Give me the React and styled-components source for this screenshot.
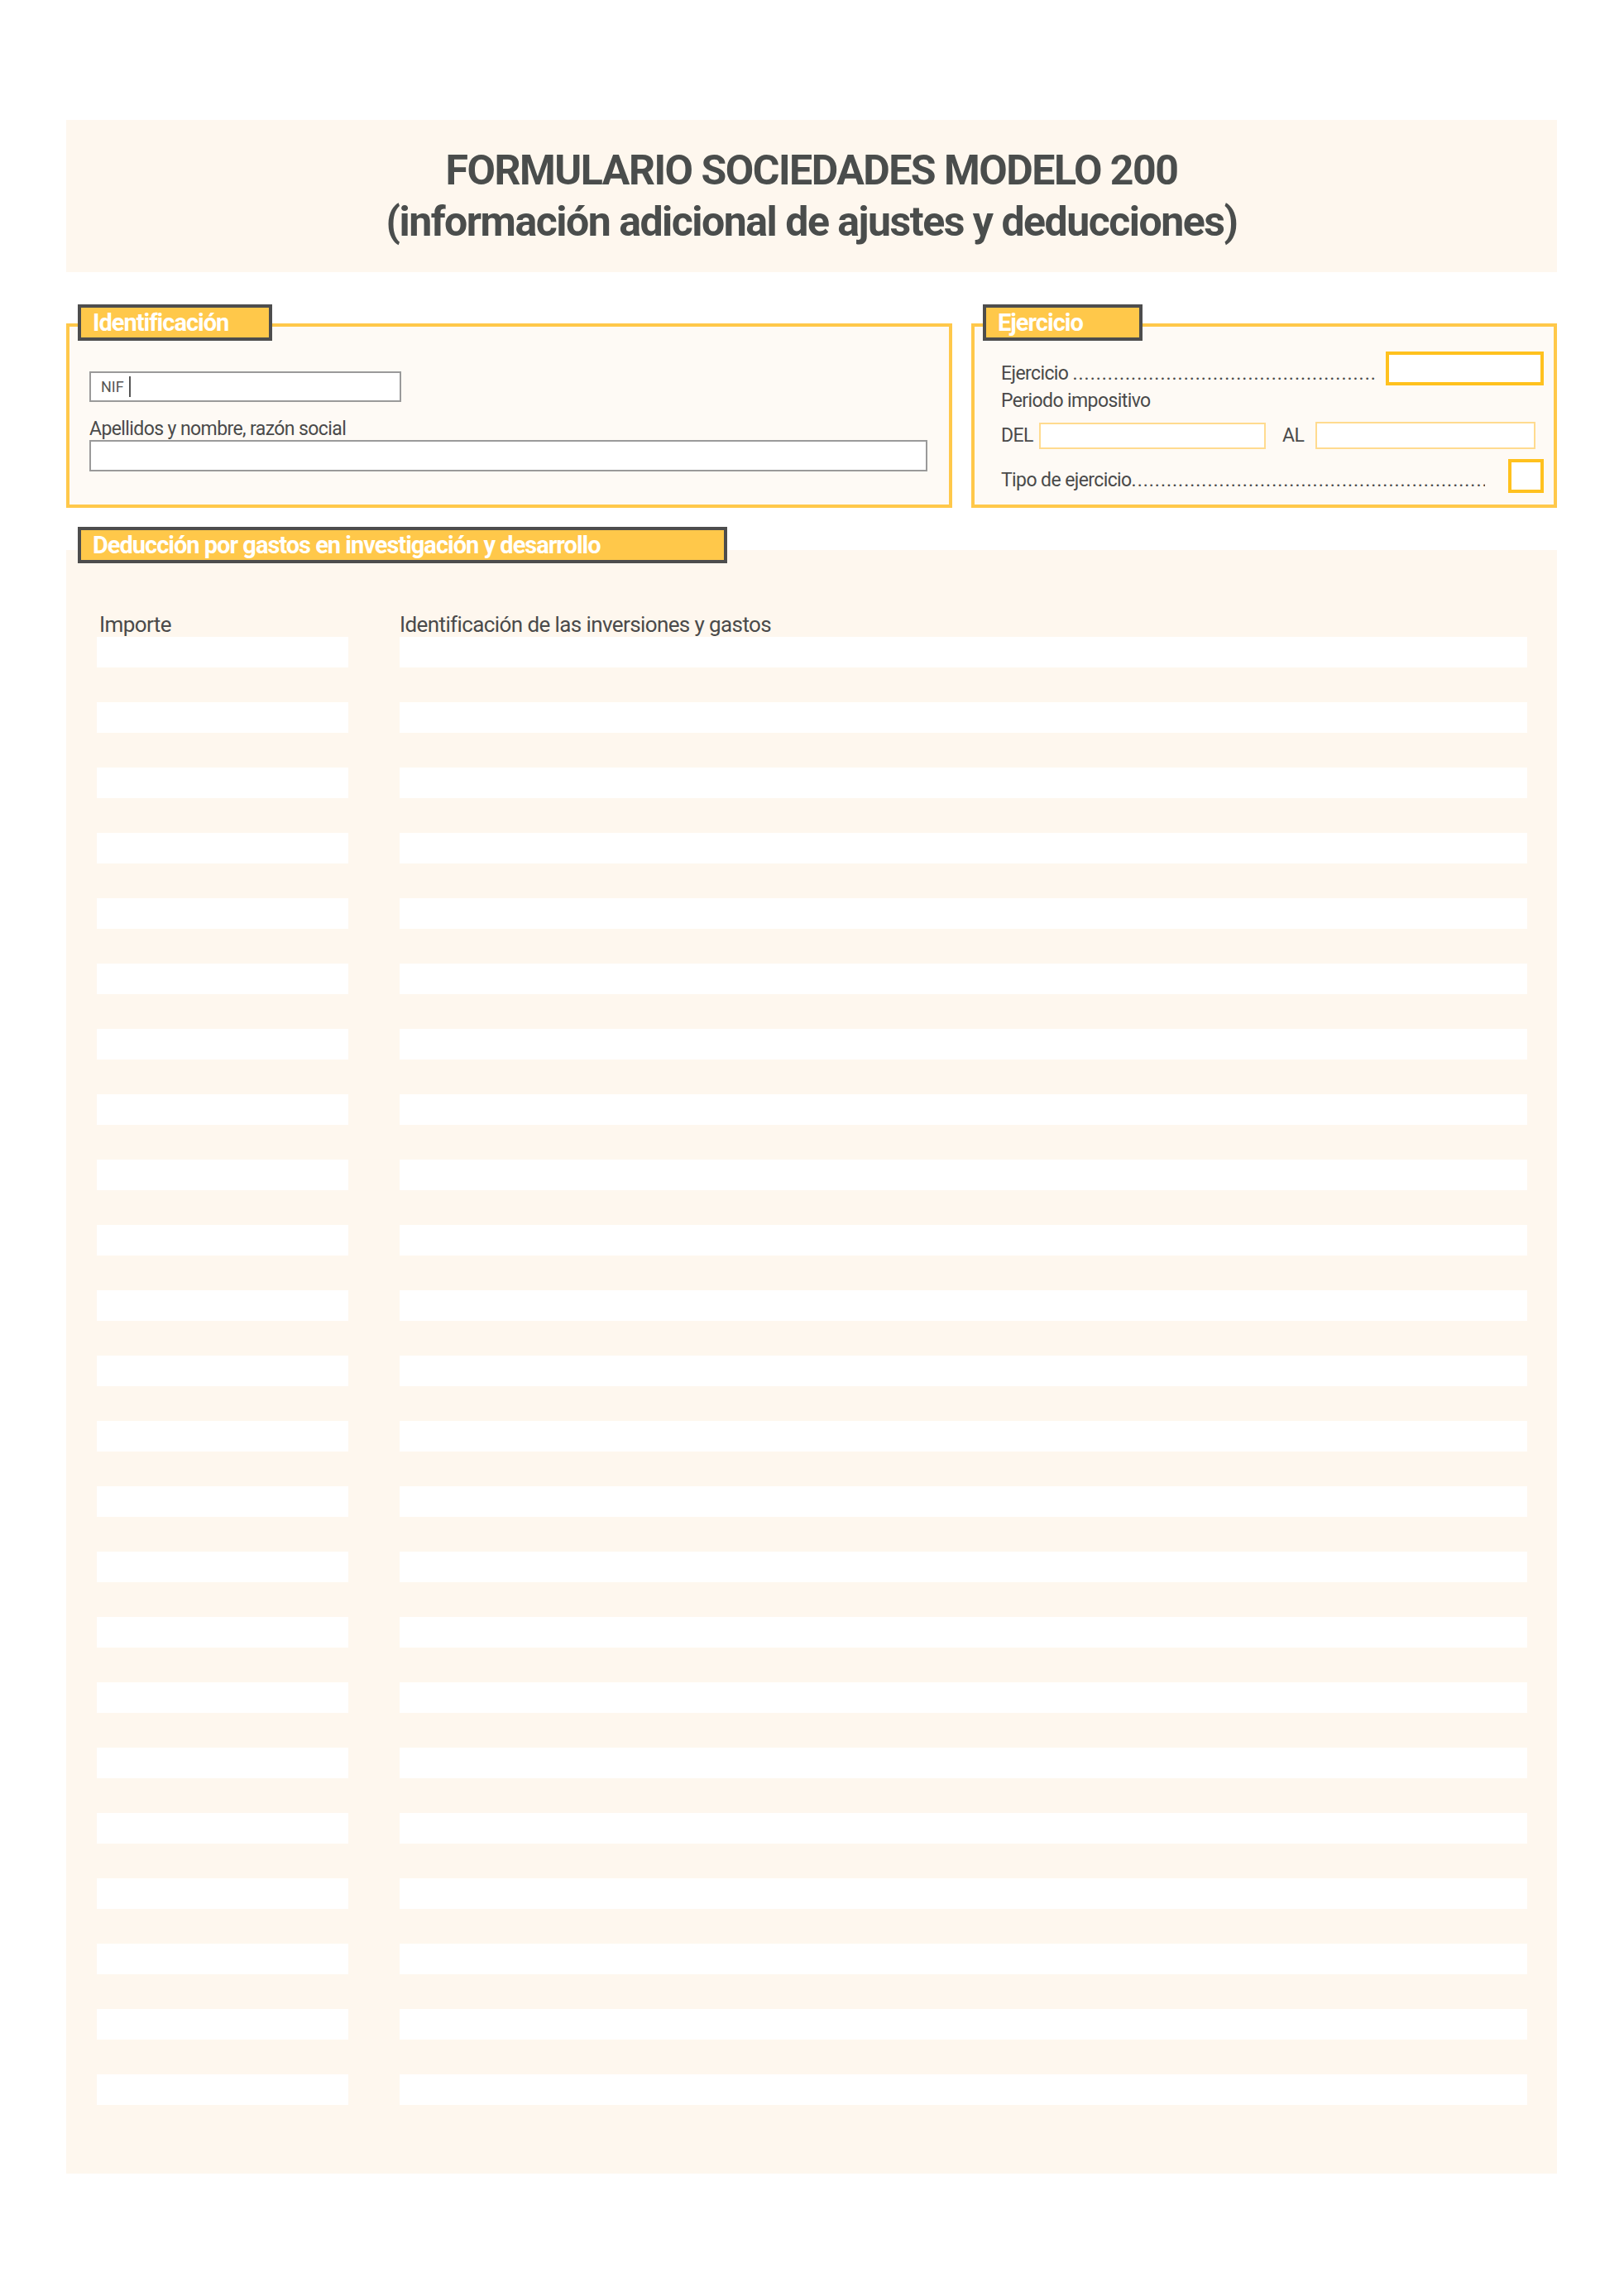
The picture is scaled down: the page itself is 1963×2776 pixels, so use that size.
import React from "react";
import styled, { createGlobalStyle } from "styled-components";

const Global = createGlobalStyle`
  body { margin: 0; background: #fff; font-family: "Roboto", "Liberation Sans", sans-serif; color: #4a4a4a; }
`;

const Page = styled.div`
  width: 1963px; height: 2776px; padding: 145px 81px 0 80px; box-sizing: border-box;
  display: flex; flex-direction: column;
`;
const Header = styled.header`
  height: 184px; background: #fef7ee; display: flex; flex-direction: column;
  align-items: center; justify-content: center; gap: 4px;
  h1 { margin: 0; font-size: 50px; line-height: 58px; font-weight: 700; color: #4a4d4c; letter-spacing: -1.5px; text-align: center; }
`;
const TopRow = styled.div`
  display: flex; gap: 23px; margin-top: 39px;
`;
const Section = styled.section`
  position: relative; width: ${p => p.$w}px; box-sizing: border-box;
  margin-top: 23px; height: 223px; border: 4px solid #ffc84a; background: #fefaf5;
  padding: ${p => p.$pad};
`;
const Tab = styled.div`
  position: absolute; top: -27px; left: 10px; width: ${p => p.$w}px; height: 44px; box-sizing: border-box;
  background: #ffc84a; border: 4px solid #4d4d4d; color: #fff; font-weight: 700;
  font-size: 29px; letter-spacing: -1px; padding-left: 14px; line-height: 36px; white-space: nowrap;
`;
const Field = styled.div`
  width: ${p => p.$w}px; height: ${p => p.$h}px; background: #fff; border: ${p => p.$b};
  box-sizing: border-box; display: flex; align-items: stretch; flex-shrink: 0;
`;
const NifLabel = styled.span`
  width: 48px; border-right: 2px solid #555; font-size: 18px; color: #555;
  display: flex; align-items: center; padding-left: 12px; box-sizing: border-box; margin: 4px 0;
`;
const Label = styled.div`
  font-size: 23px; letter-spacing: -0.6px; color: #4a4a4a; line-height: 26px; white-space: nowrap;
`;
const Line = styled.div`
  display: flex; align-items: center; gap: ${p => p.$gap || 0}px; margin-top: ${p => p.$mt || 0}px;
`;
const Dots = styled.span`
  flex: 1; overflow: hidden; white-space: nowrap; font-size: 23px; letter-spacing: 1px; margin-right: 12px;
`;
const Big = styled.section`
  position: relative; margin-top: 51px; height: 1963px; background: #fef7ee;
  padding: 75px 32px 0 37px; box-sizing: border-box;
`;
const ColHead = styled.div`
  display: grid; grid-template-columns: 366px 1fr; font-size: 26px; letter-spacing: -0.6px;
  line-height: 30px; div:first-child { padding-left: 3px; }
`;
const Rows = styled.div`
  display: flex; flex-direction: column; gap: 42px; margin-top: 0;
`;
const Row = styled.div`
  display: grid; grid-template-columns: 304px 1363px; gap: 62px; height: 37px;
  div { background: #fff; }
`;

export default function App() {
  const dots = ".".repeat(200);
  return (
    <Page>
      <Global />
      <Header>
        <h1>FORMULARIO SOCIEDADES MODELO 200</h1>
        <h1>(información adicional de ajustes y deducciones)</h1>
      </Header>
      <TopRow>
        <Section $w={1071} $pad="54px 26px 0 24px">
          <Tab $w={235}>Identificación</Tab>
          <Field $w={377} $h={37} $b="2px solid #9a9a9a"><NifLabel>NIF</NifLabel></Field>
          <Label style={{ marginTop: 20 }}>Apellidos y nombre, razón social</Label>
          <Field $w={1013} $h={38} $b="2px solid #9a9a9a" />
        </Section>
        <Section $w={708} $pad="30px 12px 0 32px">
          <Tab $w={193}>Ejercicio</Tab>
          <Line>
            <Label style={{ marginTop: 12 }}>Ejercicio&nbsp;</Label><Dots style={{ marginTop: 12 }}>{dots}</Dots>
            <Field $w={191} $h={41} $b="4px solid #ffc11e" />
          </Line>
          <Label style={{ marginTop: 6 }}>Periodo impositivo</Label>
          <Line $mt={12} $gap={10}>
            <Label style={{ width: 36 }}>DEL</Label>
            <Field $w={274} $h={32} $b="2px solid #ffdb8f" />
            <Label style={{ marginLeft: 10, width: 30 }}>AL</Label>
            <Field $w={266} $h={33} $b="2px solid #ffdb8f" />
          </Line>
          <Line $mt={12}>
            <Label style={{ marginTop: 10 }}>Tipo de ejercicio</Label><Dots style={{ marginRight: 28, marginTop: 10 }}>{dots}</Dots>
            <Field $w={43} $h={41} $b="4px solid #ffc11e" />
          </Line>
        </Section>
      </TopRow>
      <Big>
        <Tab $w={785} style={{ top: -28, left: 14 }}>Deducción por gastos en investigación y desarrollo</Tab>
        <ColHead><div>Importe</div><div>Identificación de las inversiones y gastos</div></ColHead>
        <Rows>
          {Array.from({ length: 23 }).map((_, i) => (
            <Row key={i}><div /><div /></Row>
          ))}
        </Rows>
      </Big>
    </Page>
  );
}
